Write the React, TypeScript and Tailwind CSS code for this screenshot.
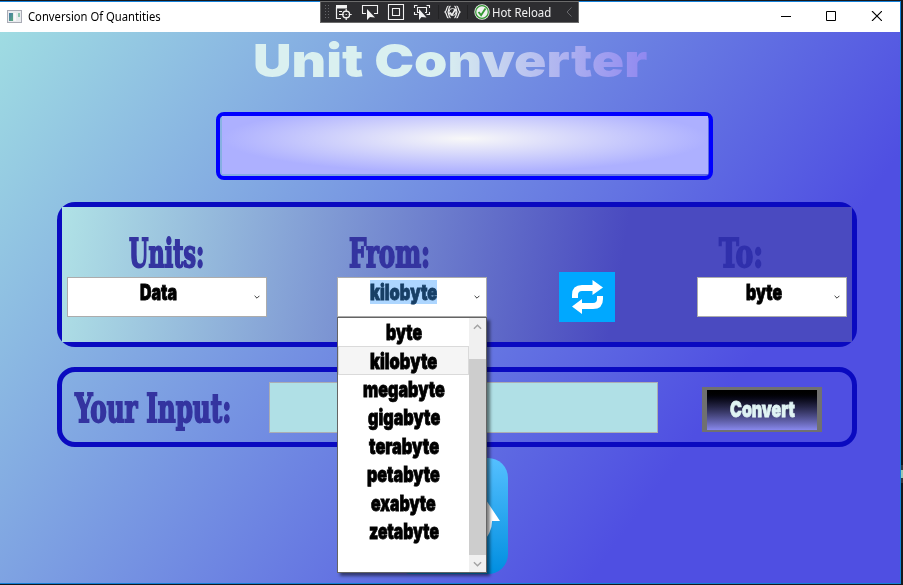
import { useLayoutEffect, useRef, useState } from "react";

type FitProps = { text: string; width: number; className?: string };

/** A single line of text squeezed or stretched to a given width. */
function FitText({ text, width, className = "" }: FitProps) {
  const ref = useRef<HTMLSpanElement>(null);
  const [scale, setScale] = useState(1);
  useLayoutEffect(() => {
    if (ref.current) setScale(width / ref.current.offsetWidth);
  }, [text, width]);
  return (
    <span className="flex shrink-0" style={{ width }}>
      <span
        ref={ref}
        className={`shrink-0 origin-left whitespace-nowrap ${className}`}
        style={{ transform: `scaleX(${scale})` }}
      >
        {text}
      </span>
    </span>
  );
}

const HEAVY =
  "font-['Inter',sans-serif] font-black text-[22px] leading-[28px] [-webkit-text-stroke:0.8px_currentColor]";
const LABEL =
  "font-['DejaVu_Serif_Condensed','DejaVu_Serif',serif] font-bold text-[39px] leading-[44px] [-webkit-text-stroke:1.8px_currentColor]";
const SYSTEM = "font-['Noto_Sans','Open_Sans',sans-serif] text-[12px] leading-[16px]";

const UNITS = [
  { name: "byte", width: 36 },
  { name: "kilobyte", width: 67 },
  { name: "megabyte", width: 82 },
  { name: "gigabyte", width: 72 },
  { name: "terabyte", width: 70 },
  { name: "petabyte", width: 73 },
  { name: "exabyte", width: 65 },
  { name: "zetabyte", width: 70 },
];

function Chevron({ up = false, className = "" }: { up?: boolean; className?: string }) {
  return (
    <svg viewBox="0 0 10 6" className={className} fill="none" stroke="currentColor" strokeWidth="1.6">
      <path d={up ? "M1 5 5 1 9 5" : "M1 1 5 5 9 1"} />
    </svg>
  );
}

function Combo({ value, width, selected = false }: { value: string; width: number; selected?: boolean }) {
  return (
    <div className="flex h-10 w-full justify-between border border-[#acacac] bg-white pr-[6px]">
      <div className="flex grow justify-center pr-[5px] pt-[2px]">
        <div className={selected ? "h-[24px] bg-[#add6ff] text-[#173f66]" : "h-[24px] text-black"}>
          <FitText text={value} width={width} className={`${HEAVY} !leading-[25px]`} />
        </div>
      </div>
      <Chevron className="mt-[17px] h-[4px] w-[6px] text-[#333]" />
    </div>
  );
}

function UnitMenu() {
  return (
    <div className="absolute left-0 top-10 z-10 flex h-[256px] w-[150px] border border-[#646464] bg-white text-black shadow-[3px_3px_3px_rgba(0,0,0,0.5)]">
      <div className="w-[131px]">
        {UNITS.map((u, i) => (
          <div
            key={u.name}
            className={`flex h-[28.4px] items-center justify-center border ${
              i === 1 ? "border-[#dadada] bg-[#f5f5f5]" : "border-transparent"
            }`}
          >
            <FitText text={u.name} width={u.width} className={HEAVY} />
          </div>
        ))}
      </div>
      <div className="flex w-[17px] flex-col items-center bg-[#f0f0f0] text-[#a3a3a3]">
        <div className="h-[41px] pt-[6px]">
          <Chevron up className="h-[6px] w-[9px]" />
        </div>
        <div className="h-[196px] w-full bg-[#cdcdcd]" />
        <Chevron className="mt-[6px] h-[6px] w-[9px]" />
      </div>
    </div>
  );
}

function DebugToolbar() {
  return (
    <div className="absolute left-[320px] top-[1px] flex h-[22px] w-[259px] items-center border border-[#6b6b6b] bg-[#2d2d30] text-[#f1f1f1]">
      <div className="ml-[3px] h-[16px] w-[6px] shrink-0 bg-[radial-gradient(#66666a_0.7px,transparent_0.8px)] bg-[length:3px_3px]" />
      <svg className="ml-[5px] h-[18px] w-[106px] shrink-0" viewBox="0 0 106 18" fill="none" stroke="currentColor">
        <path d="M1.5 15.5V4M1 3h11M1 5h11M4 8.5h3M4 11.5h2M1 15.5h5" strokeWidth="1.2" />
        <path d="M1 2h11v3H1z" fill="currentColor" stroke="none" />
        <circle cx="11.2" cy="11.5" r="3.4" strokeWidth="1.3" />
        <path d="M11.2 6v3M11.2 14v3M5.7 11.5h3M13.7 11.5h3M11.2 11v1" strokeWidth="1.2" />
        <path d="M31 10.5h-3.5v-8h15v8H39" strokeWidth="1.1" />
        <path d="M32 6v11l3-3 5 .4z" fill="currentColor" stroke="none" />
        <path d="M53.5 1.5h15v15h-15zM57.5 5.5h7v7h-7z" strokeWidth="1.1" />
        <path d="M79.5 5V2.5h3M91.5 2.5h3V5M79.5 9v2.5h3M91.5 11.5h3V9M84 9.5h-1.5v-5h9v5H90" strokeWidth="1.1" />
        <path d="M84 6v11l2.5-3 5 .4z" fill="currentColor" stroke="none" />
        <path d="M103.5 2v14" stroke="#222224" />
      </svg>
      <svg className="ml-[3px] h-[14px] w-[17px] shrink-0" viewBox="0 0 17 14" fill="none" stroke="currentColor" strokeWidth="1.2">
        <path d="M4.500 1C2 1.500 3.500 5 1 7c2.500 2 1 5.500 3.500 6M12.500 1c2.500.5 1 4 3.500 6-2.500 2-1 5.500-3.500 6M6.500 1C4.500 2 5 5 4 7c1 2 .5 5 2.500 6M10.500 1c2 1 1.500 4 2.500 6-1 2-.5 5-2.500 6" />
        <path d="M6 7.500 8 10l3.500-6" strokeWidth="1.500" />
        <circle cx="8.500" cy="7" r="3.500" strokeWidth=".9" />
      </svg>
      <div className="ml-[6px] h-[14px] w-px shrink-0 bg-[#222224]" />
      <svg className="ml-[6px] h-[16px] w-[16px] shrink-0" viewBox="0 0 16 16" fill="none">
        <circle cx="8" cy="8" r="7.700" fill="#f1f1f1" />
        <circle cx="8" cy="8" r="6.300" stroke="#339933" strokeWidth="1.200" />
        <path d="m4.500 8 2.600 3.200L11.500 4.500" stroke="#339933" strokeWidth="1.900" />
      </svg>
      <div className="ml-[2px] mt-px w-[59px] shrink-0">
        <FitText text="Hot Reload" width={59} className={SYSTEM} />
      </div>
      <svg className="ml-[15px] h-[10px] w-[6px] shrink-0 text-[#66666a]" viewBox="0 0 6 10" fill="none" stroke="currentColor">
        <path d="M5.500.5 1 5l4.500 4.500" />
      </svg>
    </div>
  );
}

function TitleBar() {
  return (
    <header className="flex h-[30px] items-center bg-white pl-[7px]">
      <div className="mb-[2px] h-[13px] w-[15px] border border-[#a9abb5] bg-[#e9ebee] p-px">
        <div className="flex h-full gap-px pt-px">
          <div className="w-[5px] bg-gradient-to-br from-[#4a78a8] to-[#58a878]" />
          <div className="w-[3px] bg-[#f8f8f8]" />
          <div className="ml-px h-[4px] w-[2px] bg-[#8fc4b0]" />
        </div>
      </div>
      <div className="ml-[6px]">
        <FitText text="Conversion Of Quantities" width={133} className={`${SYSTEM} text-black`} />
      </div>
      <svg className="ml-auto mr-[18px] h-[10px] w-[101px] -translate-y-px" viewBox="0 0 101 10" fill="none" stroke="black">
        <path d="M0 5.500h10M45.500.5h9v9h-9z" />
        <path d="M91 0l10 10M101 0 91 10" strokeWidth="1.100" />
      </svg>
    </header>
  );
}

export default function App() {
  return (
    <div className="relative flex h-[585px] w-[903px] flex-col overflow-hidden bg-[#17181c] pt-px">
      <div className="flex h-[583px] w-[901px] flex-col border-b border-r border-t border-[#1480d8]">
        <TitleBar />
        <main className="h-[551px] bg-[linear-gradient(126deg,#9fdce2_0%,#4f4fe2_76%)]">
          <h1 className="flex h-[80px] pl-[253px] pt-[2px]">
            <FitText
              text="Unit Converter"
              width={394}
              className="bg-[linear-gradient(90deg,#daf0f0_48%,#9088f0_100%)] bg-clip-text font-['Inter',sans-serif] text-[46px] font-black leading-[52px] text-transparent"
            />
          </h1>

          <div className="ml-[216px] h-[68px] w-[497px] rounded-[8px] border-4 border-[#0000ff] pl-[2px] pr-px">
            <div className="h-[58px] bg-[radial-gradient(243px_34px_at_50%_39%,#f8f8f8,#adb0ff)]" />
          </div>

          <section className="ml-[57px] mt-[22px] h-[145px] w-[800px] rounded-[18px] bg-[#0a0ac0] p-[5px]">
            <div className="flex h-[135px] items-start bg-[linear-gradient(99.7deg,#b0e2e6_0%,#4a4ac0_70%)] px-[5px] pt-[24px] text-[#3434a0]">
              <div className="w-[200px]">
                <div className="h-[46px] pl-[62px]">
                  <FitText text="Units:" width={75} className={LABEL} />
                </div>
                <Combo value="Data" width={37} />
              </div>
              <div className="ml-[70px] w-[150px]">
                <div className="h-[46px] pl-[12px]">
                  <FitText text="From:" width={81} className={LABEL} />
                </div>
                <div className="relative">
                  <Combo value="kilobyte" width={67} selected />
                  <UnitMenu />
                </div>
              </div>
              <button className="ml-[72px] mt-[41px] flex h-[50px] w-[56px] items-center justify-center bg-[#00a8ff]">
                <svg className="h-[36px] w-[33px]" viewBox="0 0 33 36" fill="none" stroke="white" strokeWidth="6">
                  <path d="M4 19v-3q0-7 7-7H22" />
                  <path d="M29 17v3q0 7-7 7H11" />
                  <path d="M21.500 1v15L32 8.500zM11 20v15L1 27.500z" fill="white" stroke="none" />
                </svg>
              </button>
              <div className="ml-[82px] w-[150px]">
                <div className="h-[46px] pl-[22px] text-[#3030ac]">
                  <FitText text="To:" width={44} className={LABEL} />
                </div>
                <Combo value="byte" width={36} />
              </div>
            </div>
          </section>

          <section className="ml-[57px] mt-[20px] flex h-[80px] w-[800px] items-start rounded-[18px] border-[5px] border-[#0a0ac0] text-[#3434a0]">
            <div className="ml-[13px] mt-[14px]">
              <FitText text="Your Input:" width={156} className={LABEL} />
            </div>
            <div className="ml-[38px] mt-[10px] h-[51px] w-[389px] border border-[#abadb3] bg-[#b0e0e6]" />
            <button className="ml-[44px] mt-[15px] flex h-[45px] w-[120px] items-center justify-center border-x-[5px] border-b-2 border-t-[3px] border-[#707070] bg-gradient-to-b from-black to-[#8888ec] text-[#e0f4f4]">
              <div className="pb-[2px]">
                <FitText text="Convert" width={65} className={HEAVY} />
              </div>
            </button>
          </section>

          <svg className="ml-[392px] mt-[11px] h-[116px] w-[116px]" viewBox="0 0 116 116">
            <defs>
              <linearGradient id="badge" x1="0" y1="0" x2="0" y2="1">
                <stop offset="0" stopColor="#55c0ff" />
                <stop offset="1" stopColor="#008ee0" />
              </linearGradient>
            </defs>
            <rect width="116" height="116" rx="20" fill="url(#badge)" />
            <path d="M90 36 108 63h-8q0 12-10 22z" fill="white" />
          </svg>
        </main>
      </div>
      <DebugToolbar />
      <div className="absolute right-0 top-[465px] h-[18px] w-[2px] bg-[#38383c] py-[5px]">
        <div className="h-[8px] bg-[#9cc8b4]" />
      </div>
    </div>
  );
}
